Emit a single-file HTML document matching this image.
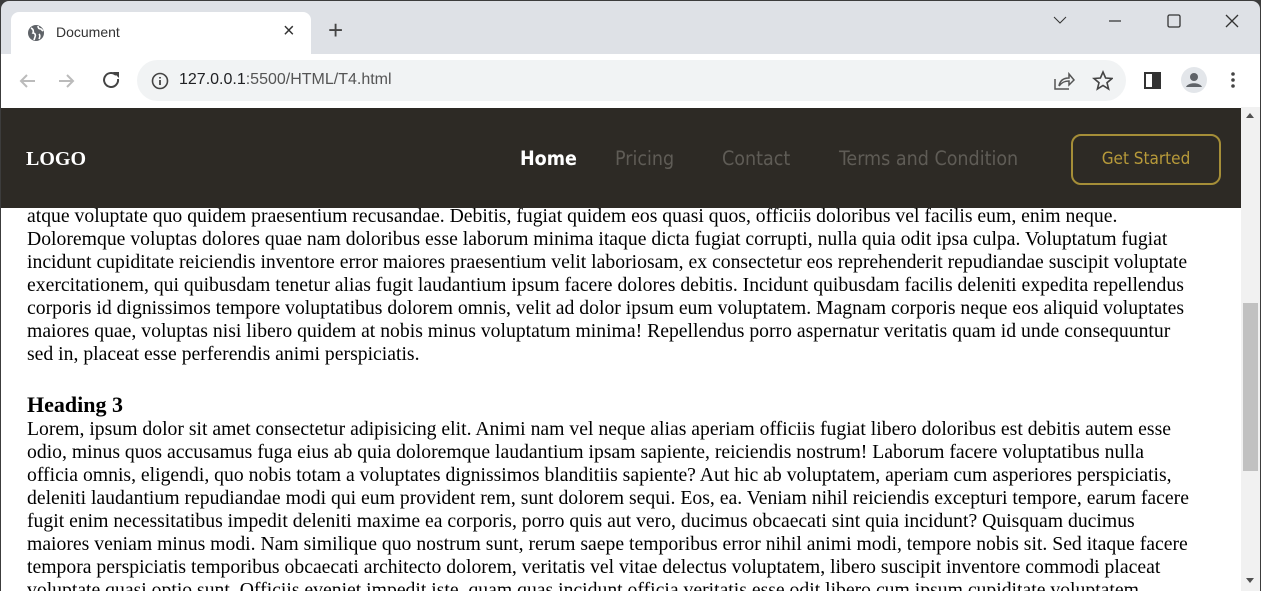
<!DOCTYPE html>
<html><head><meta charset="utf-8"><style>
*{margin:0;padding:0;box-sizing:border-box}
body{width:1261px;height:591px;overflow:hidden;background:#3c3c3c;position:relative;font-family:"Liberation Sans",sans-serif}
.win{position:absolute;left:1px;top:1px;width:1259px;height:590px;background:#dee1e6;border-radius:8px 8px 0 0;overflow:hidden}
.tab{position:absolute;left:10px;top:11px;width:300px;height:42px;background:#fff;border-radius:8px 8px 0 0}
.tab .t{position:absolute;left:45px;top:12px;font-size:14px;color:#333}
.toolbar{position:absolute;left:0;top:53px;width:1259px;height:53px;background:#fff}
.omni{position:absolute;left:136px;top:6px;width:989px;height:41px;background:#f1f3f4;border-radius:21px}
.url{position:absolute;left:42px;top:11px;font-size:16px;color:#555}
.url b{font-weight:normal;color:#202124}
.page{position:absolute;left:0;top:106px;width:1259px;height:484px;background:#fff;overflow:hidden}
.nav{position:absolute;left:0;top:1px;width:1240px;height:100px;background:#2d2a25;z-index:2}
.logo{position:absolute;left:25px;top:40px;font-family:"Liberation Serif",serif;font-weight:bold;font-size:20px;color:#fff}
.nav a{position:absolute;top:39px;font-family:"Comic Sans MS","DejaVu Sans Condensed","DejaVu Sans",sans-serif;font-size:19.5px;color:#5f5c56;white-space:nowrap}
.btn{position:absolute;left:1070px;top:26px;width:150px;height:51px;border:2px solid #a58e38;border-radius:10px;color:#b79a3a;font-family:"Comic Sans MS","DejaVu Sans Condensed",sans-serif;font-size:17px;text-align:center;line-height:47px}
.txt{position:absolute;left:26px;top:98px;font-family:"Liberation Serif",serif;font-size:19.7px;line-height:23px;color:#000;white-space:nowrap}
.txt div{height:23px}
h3{font-size:22px;height:27px;line-height:27px;margin-top:25px}
.sb{position:absolute;left:1240px;top:0;width:19px;height:484px;background:#f1f1f1}
.thumb{position:absolute;left:2px;top:196px;width:15px;height:168px;background:#c1c1c1}
</style></head><body>
<div class="win">
 <div class="tab">
  <svg style="position:absolute;left:16px;top:12px" width="18" height="18" viewBox="0 0 18 18"><circle cx="9" cy="9" r="8" fill="#5f6368"/><path d="M4 4c2 1 3 3 2 5 2 0 3 2 2 4l-1 3M11 2c0 2 1 3 3 3l2 2M12 10c1 1 1 3 0 5" stroke="#fff" stroke-width="1.6" fill="none"/></svg>
  <div class="t">Document</div>
  <div style="position:absolute;left:272px;top:8px;font-size:20px;color:#333">×</div>
 </div>
 <div style="position:absolute;left:327px;top:14px;font-size:26px;color:#444">+</div>
 <svg style="position:absolute;left:1050px;top:12px" width="200" height="16" viewBox="0 0 200 16"><path d="M3 4l6 6 6-6" stroke="#333" fill="none"/><path d="M58 8h12" stroke="#333" stroke-width="1.3"/><rect x="117" y="2" width="12" height="12" rx="1.5" stroke="#333" fill="none" stroke-width="1.3"/><path d="M175 2l12 12M187 2l-12 12" stroke="#333" stroke-width="1.3"/></svg>
 <div class="toolbar">
  <svg style="position:absolute;left:16px;top:17px" width="110" height="20" viewBox="0 0 110 20"><path d="M18 10H4M10 4l-6 6 6 6" stroke="#bbb" stroke-width="2" fill="none"/><path d="M42 10h14M50 4l6 6-6 6" stroke="#bbb" stroke-width="2" fill="none"/><path d="M99 4a7 7 0 1 0 2 4" stroke="#444" stroke-width="2" fill="none"/><path d="M96 1h6v6z" fill="#444"/></svg>
  <div class="omni">
   <svg style="position:absolute;left:14px;top:12px" width="18" height="18" viewBox="0 0 18 18"><circle cx="9" cy="9" r="7.5" stroke="#444" stroke-width="1.6" fill="none"/><path d="M9 8v5M9 5v1.5" stroke="#444" stroke-width="1.8"/></svg>
   <div class="url"><b>127.0.0.1</b>:5500/HTML/T4.html</div>
   <svg style="position:absolute;left:916px;top:10px" width="60" height="22" viewBox="0 0 60 22"><path d="M2 9v10h14M6 16c1-6 5-8 10-8V4l5 6-5 5v-4c-4 0-7 1-10 5" stroke="#555" stroke-width="1.5" fill="none"/><path d="M50 2l2.6 6 6.4.5-5 4.2 1.6 6.3-5.6-3.5-5.6 3.5 1.6-6.3-5-4.2 6.4-.5z" stroke="#444" stroke-width="1.6" fill="none"/></svg>
  </div>
  <svg style="position:absolute;left:1142px;top:13px" width="100" height="28" viewBox="0 0 100 28"><rect x="2" y="6" width="15" height="15" stroke="#333" stroke-width="2" fill="none"/><rect x="9" y="6" width="8" height="15" fill="#333"/><circle cx="51" cy="13" r="13" fill="#e3e6ea"/><circle cx="51" cy="10" r="4" fill="#5f6368"/><path d="M43 20c2-5 14-5 16 0z" fill="#5f6368"/><circle cx="90" cy="7" r="1.8" fill="#444"/><circle cx="90" cy="13" r="1.8" fill="#444"/><circle cx="90" cy="19" r="1.8" fill="#444"/></svg>
 </div>
 <div class="page">
  <div class="nav">
   <div class="logo">LOGO</div>
   <a style="left:519px;color:#fff;font-weight:bold">Home</a>
   <a style="left:614px">Pricing</a>
   <a style="left:721px">Contact</a>
   <a style="left:838px">Terms and Condition</a>
   <div class="btn">Get Started</div>
  </div>
  <div class="txt">
   <div>atque voluptate quo quidem praesentium recusandae. Debitis, fugiat quidem eos quasi quos, officiis doloribus vel facilis eum, enim neque.</div>
   <div>Doloremque voluptas dolores quae nam doloribus esse laborum minima itaque dicta fugiat corrupti, nulla quia odit ipsa culpa. Voluptatum fugiat</div>
   <div>incidunt cupiditate reiciendis inventore error maiores praesentium velit laboriosam, ex consectetur eos reprehenderit repudiandae suscipit voluptate</div>
   <div>exercitationem, qui quibusdam tenetur alias fugit laudantium ipsum facere dolores debitis. Incidunt quibusdam facilis deleniti expedita repellendus</div>
   <div>corporis id dignissimos tempore voluptatibus dolorem omnis, velit ad dolor ipsum eum voluptatem. Magnam corporis neque eos aliquid voluptates</div>
   <div>maiores quae, voluptas nisi libero quidem at nobis minus voluptatum minima! Repellendus porro aspernatur veritatis quam id unde consequuntur</div>
   <div>sed in, placeat esse perferendis animi perspiciatis.</div>
   <h3>Heading 3</h3>
   <div>Lorem, ipsum dolor sit amet consectetur adipisicing elit. Animi nam vel neque alias aperiam officiis fugiat libero doloribus est debitis autem esse</div>
   <div>odio, minus quos accusamus fuga eius ab quia doloremque laudantium ipsam sapiente, reiciendis nostrum! Laborum facere voluptatibus nulla</div>
   <div>officia omnis, eligendi, quo nobis totam a voluptates dignissimos blanditiis sapiente? Aut hic ab voluptatem, aperiam cum asperiores perspiciatis,</div>
   <div>deleniti laudantium repudiandae modi qui eum provident rem, sunt dolorem sequi. Eos, ea. Veniam nihil reiciendis excepturi tempore, earum facere</div>
   <div>fugit enim necessitatibus impedit deleniti maxime ea corporis, porro quis aut vero, ducimus obcaecati sint quia incidunt? Quisquam ducimus</div>
   <div>maiores veniam minus modi. Nam similique quo nostrum sunt, rerum saepe temporibus error nihil animi modi, tempore nobis sit. Sed itaque facere</div>
   <div>tempora perspiciatis temporibus obcaecati architecto dolorem, veritatis vel vitae delectus voluptatem, libero suscipit inventore commodi placeat</div>
   <div>voluptate quasi optio sunt. Officiis eveniet impedit iste, quam quas incidunt officia veritatis esse odit libero cum ipsum cupiditate voluptatem.</div>
  </div>
  <div class="sb"><div class="thumb"></div>
   <div style="position:absolute;left:5px;top:6px;border:4px solid transparent;border-bottom:5px solid #505050;border-top:0"></div>
   <div style="position:absolute;left:5px;top:471px;border:4px solid transparent;border-top:5px solid #505050;border-bottom:0"></div>
  </div>
 </div>
</div>
</body></html>
